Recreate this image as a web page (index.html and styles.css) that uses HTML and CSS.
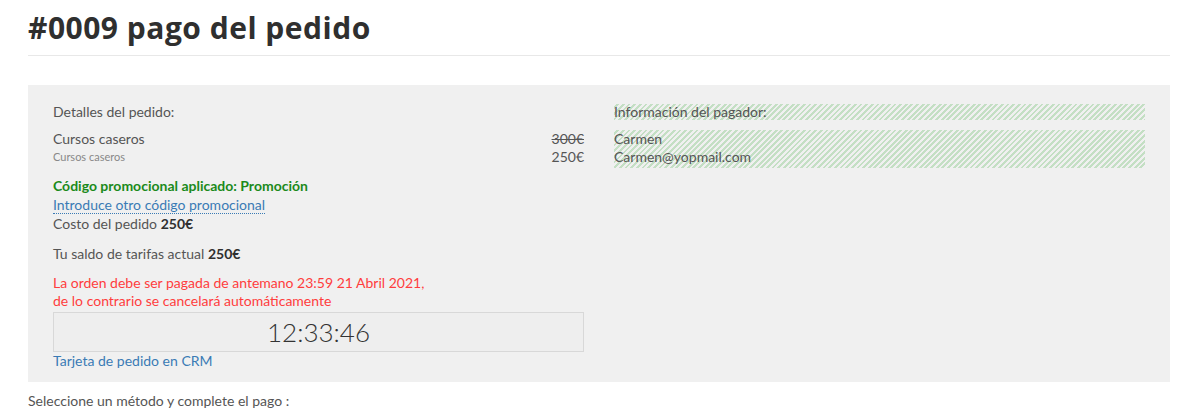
FILE: index.html
```html
<!DOCTYPE html>
<html lang="es">
<head>
<meta charset="utf-8">
<title>#0009 pago del pedido</title>
<link rel="stylesheet" href="styles.css">
</head>
<body>
<div class="page">
  <h1 class="title">#0009 pago del pedido</h1>
  <div class="panel">
    <div class="col">
      <div class="label">Detalles del pedido:</div>
      <div class="item">
        <div class="item-info">
          <div class="item-name">Cursos caseros</div>
          <div class="item-desc">Cursos caseros</div>
        </div>
        <div class="item-prices">
          <div class="old-price">300€</div>
          <div>250€</div>
        </div>
      </div>
      <div class="promo">
        <div class="promo-ok">Código promocional aplicado: Promoción</div>
        <a class="link dotted" href="#">Introduce otro código promocional</a>
        <div>Costo del pedido <b>250€</b></div>
      </div>
      <div class="balance">Tu saldo de tarifas actual <b>250€</b></div>
      <div class="warning">La orden debe ser pagada de antemano 23:59 21 Abril 2021,<br>de lo contrario se cancelará automáticamente</div>
      <div class="timer">12:33:46</div>
      <a class="link crm" href="#">Tarjeta de pedido en CRM</a>
    </div>
    <div class="col">
      <div class="hatch head">Información del pagador:</div>
      <div class="hatch payer">
        <div>Carmen</div>
        <div>Carmen@yopmail.com</div>
      </div>
    </div>
  </div>
  <div class="select">Seleccione un método y complete el pago :</div>
</div>
</body>
</html>
```
FILE: styles.css
```css
html, body {
  margin: 0;
  padding: 0;
  background: #fff;
}
body {
  font-family: Lato, "Open Sans", sans-serif;
  font-size: 14px;
  color: #555;
}
.page {
  width: 1142px;
  margin-left: 28px;
}
.title {
  margin: 10px 0 0;
  padding-bottom: 9px;
  font-family: "Open Sans", Lato, sans-serif;
  font-size: 30px;
  letter-spacing: 0.5px;
  line-height: 36px;
  font-weight: 700;
  color: #2f2f2f;
  border-bottom: 1px solid #e8e8e8;
}
.panel {
  margin-top: 29px;
  background: #f0f0f0;
  padding: 17px 25px 12px;
  display: grid;
  grid-template-columns: 1fr 1fr;
  column-gap: 30px;
  align-items: start;
}
.label {
  line-height: 20px;
}
.item {
  margin-top: 7px;
  display: flex;
  justify-content: space-between;
}
.item-name {
  line-height: 20px;
}
.item-desc {
  font-size: 11px;
  line-height: 16px;
  color: #888;
}
.item-prices {
  text-align: right;
  line-height: 18px;
  padding-top: 1px;
}
.old-price {
  text-decoration: line-through;
}
.promo {
  margin-top: 10px;
  line-height: 19px;
}
.promo b, .balance b {
  color: #2f2f2f;
}
.promo-ok {
  color: #1b8a1b;
  font-weight: 700;
}
.link {
  color: #3a7bb5;
  text-decoration: none;
}
.dotted {
  border-bottom: 1px dotted #3a7bb5;
}
.balance {
  margin-top: 11px;
  line-height: 19px;
}
.warning {
  margin-top: 11px;
  line-height: 18px;
  color: #ff3d3d;
}
.timer {
  margin-top: 2px;
  height: 38px;
  border: 1px solid #d8d8d8;
  background: #eeeeee;
  font-size: 26px;
  font-weight: 300;
  line-height: 38px;
  text-align: center;
  color: #333;
}
.crm {
  display: block;
  line-height: 18px;
}
.hatch {
  background: repeating-linear-gradient(135deg, #f0f0f0 0 2px, #c4dfc4 2px 4px);
}
.head {
  margin-top: 2px;
  line-height: 16px;
}
.payer {
  margin-top: 10px;
  line-height: 18px;
  padding-bottom: 2px;
}
.select {
  margin-top: 10px;
  line-height: 18px;
}
```
